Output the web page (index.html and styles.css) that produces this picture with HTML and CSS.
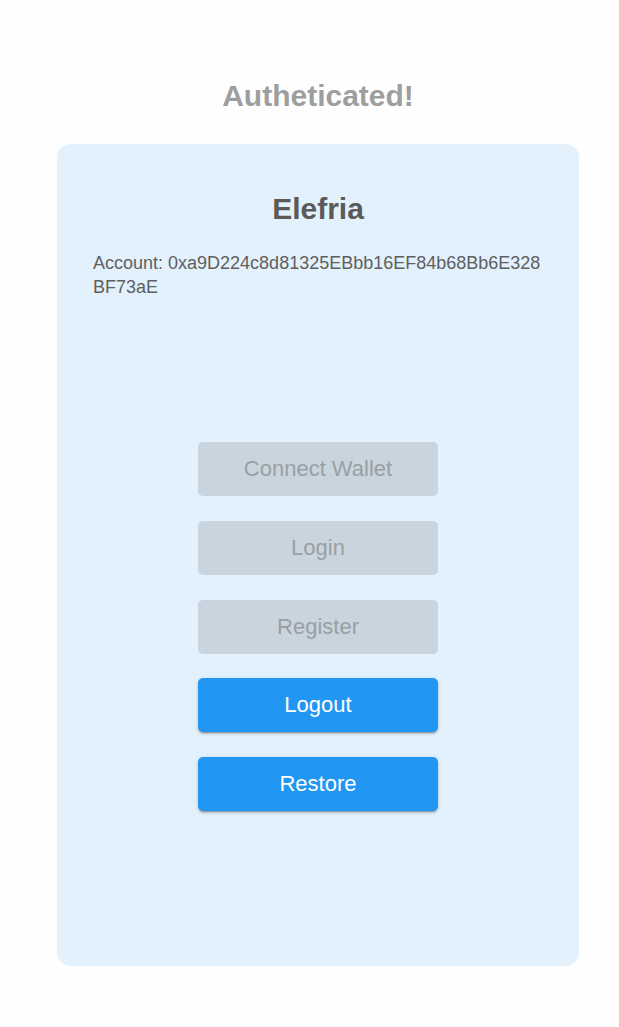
FILE: index.html
```html
<!DOCTYPE html>
<html>
<head>
<meta charset="utf-8">
<link rel="stylesheet" href="styles.css">
</head>
<body>
<div class="page">
  <h1 class="status">Autheticated!</h1>
  <div class="card">
    <h2 class="name">Elefria</h2>
    <p class="account">Account: 0xa9D224c8d81325EBbb16EF84b68Bb6E328BF73aE</p>
    <div class="actions">
      <button class="btn btn-disabled">Connect Wallet</button>
      <button class="btn btn-disabled">Login</button>
      <button class="btn btn-disabled">Register</button>
      <button class="btn btn-primary">Logout</button>
      <button class="btn btn-primary">Restore</button>
    </div>
  </div>
</div>
</body>
</html>
```
FILE: styles.css
```css
html, body {
  margin: 0;
  padding: 0;
  background: #fefefe;
  font-family: "Liberation Sans", Arial, sans-serif;
}
.page {
  width: 522px;
  margin-left: 57px;
  padding-top: 78px;
  padding-bottom: 61px;
}
.status {
  margin: 0 0 30px;
  font-size: 30px;
  line-height: 36px;
  font-weight: bold;
  color: #9e9e9e;
  text-align: center;
}
.card {
  background: #e3f1fc;
  border-radius: 14px;
  padding: 47px 36px 155px;
  display: flex;
  flex-direction: column;
}
.name {
  margin: 0 0 24px;
  font-size: 30px;
  line-height: 36px;
  font-weight: bold;
  color: #5a5a5a;
  text-align: center;
}
.account {
  margin: 0;
  font-size: 18px;
  line-height: 24px;
  color: #5f5f5f;
  word-break: break-all;
}
.actions {
  margin-top: 143px;
  display: flex;
  flex-direction: column;
  align-items: center;
  gap: 24.75px;
}
.btn {
  width: 240px;
  height: 54px;
  border: none;
  border-radius: 5px;
  font-family: "Liberation Sans", Arial, sans-serif;
  font-size: 22px;
  padding: 0;
}
.btn-disabled {
  background: #c8d5de;
  color: #9a9fa3;
}
.btn-primary {
  background: #2196f3;
  color: #ffffff;
  box-shadow: 0 3px 1px -2px rgba(0,0,0,0.2), 0 2px 2px 0 rgba(0,0,0,0.14), 0 1px 5px 0 rgba(0,0,0,0.12);
}
```
